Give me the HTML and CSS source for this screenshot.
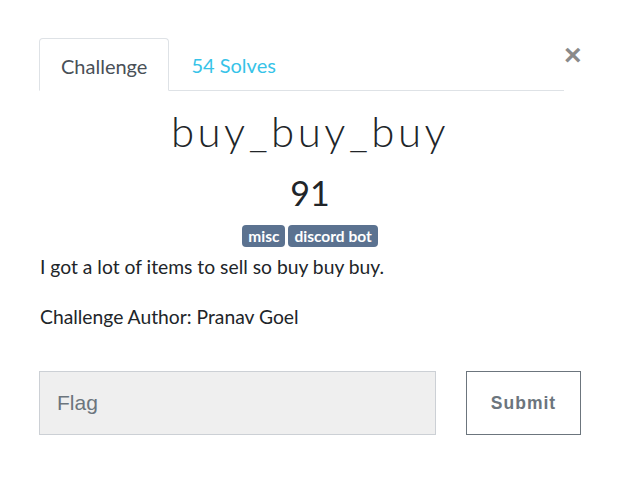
FILE: index.html
```html
<!DOCTYPE html>
<html>
<head>
<meta charset="utf-8">
<link rel="stylesheet" href="styles.css">
</head>
<body>
<div class="modal">
  <div class="head">
    <ul class="tabs">
      <li class="tab active">Challenge</li>
      <li class="tab link">54 Solves</li>
    </ul>
    <button class="close" aria-label="Close">&times;</button>
  </div>
  <h2 class="name">buy_buy_buy</h2>
  <h3 class="value">91</h3>
  <div class="tags">
    <span class="badge">misc</span>
    <span class="badge">discord bot</span>
  </div>
  <p class="desc">I got a lot of items to sell so buy buy buy.</p>
  <p class="desc author">Challenge Author: Pranav Goel</p>
  <form class="submit-row">
    <input class="flag" type="text" placeholder="Flag">
    <button class="submit" type="button">Submit</button>
  </form>
</div>
</body>
</html>
```

FILE: styles.css
```css
* { box-sizing: border-box; }
html, body { margin: 0; padding: 0; background: #fff; }
body { font-family: Lato, "Open Sans", sans-serif; color: #212529; width: 620px; height: 495px; }
.modal { padding: 38px 39px 0 39px; }
.head { display: flex; align-items: flex-start; }
.tabs {
  list-style: none; margin: 0; padding: 0; display: flex;
  width: 525px; border-bottom: 1px solid #dee2e6;
}
.tab { font-size: 20px; height: 52px; line-height: 54px; padding: 0 22px; }
.tab.active {
  color: #495057; border: 1px solid #dee2e6; border-bottom-color: #fff;
  border-radius: 4px 4px 0 0; margin-bottom: -1px; height: 53px; padding: 0 21px;
}
.tab.link { color: #37c3e8; }
.close {
  background: none; border: 0; padding: 0; margin: 2px 0 0 0;
  width: 17px; font-family: "Liberation Sans", Arial, sans-serif;
  font-size: 30px; font-weight: 700; line-height: 30px; color: #8a8a8a;
  margin-left: auto;
}
.name {
  margin: 16px 0 0; text-align: center; font-weight: 300; font-size: 42px;
  letter-spacing: 3.5px; line-height: 48px;
}
.value { margin: 18px 0 0; text-align: center; font-weight: 400; font-size: 34px; line-height: 40px; }
.tags { display: flex; justify-content: center; gap: 3px; margin-top: 12px; }
.badge {
  background: #5b7290; color: #fff; font-weight: 700; font-size: 15.5px;
  height: 22px; line-height: 22px; padding: 0 6px; border-radius: 4px;
}
.desc { margin: 6px 0 0; font-size: 19.3px; line-height: 28px; color: #212529; padding-left: 1px; }
.author { margin-top: 22px; }
.submit-row { display: flex; gap: 30px; margin-top: 40px; }
.flag {
  width: 397px; height: 64px; background: #efefef; border: 1px solid #ccd0d5;
  padding: 0 17px; font-family: "Liberation Sans", Arial, sans-serif; font-size: 21px;
  border-radius: 0; outline: none;
}
.flag::placeholder { color: #6c757d; }
.submit {
  width: 115px; height: 64px; background: #fff; border: 1px solid #6c757d; border-radius: 0;
  color: #6c757d; font-family: "Liberation Sans", Arial, sans-serif; font-weight: 700; font-size: 17.5px;
  letter-spacing: 1px;
}
```
